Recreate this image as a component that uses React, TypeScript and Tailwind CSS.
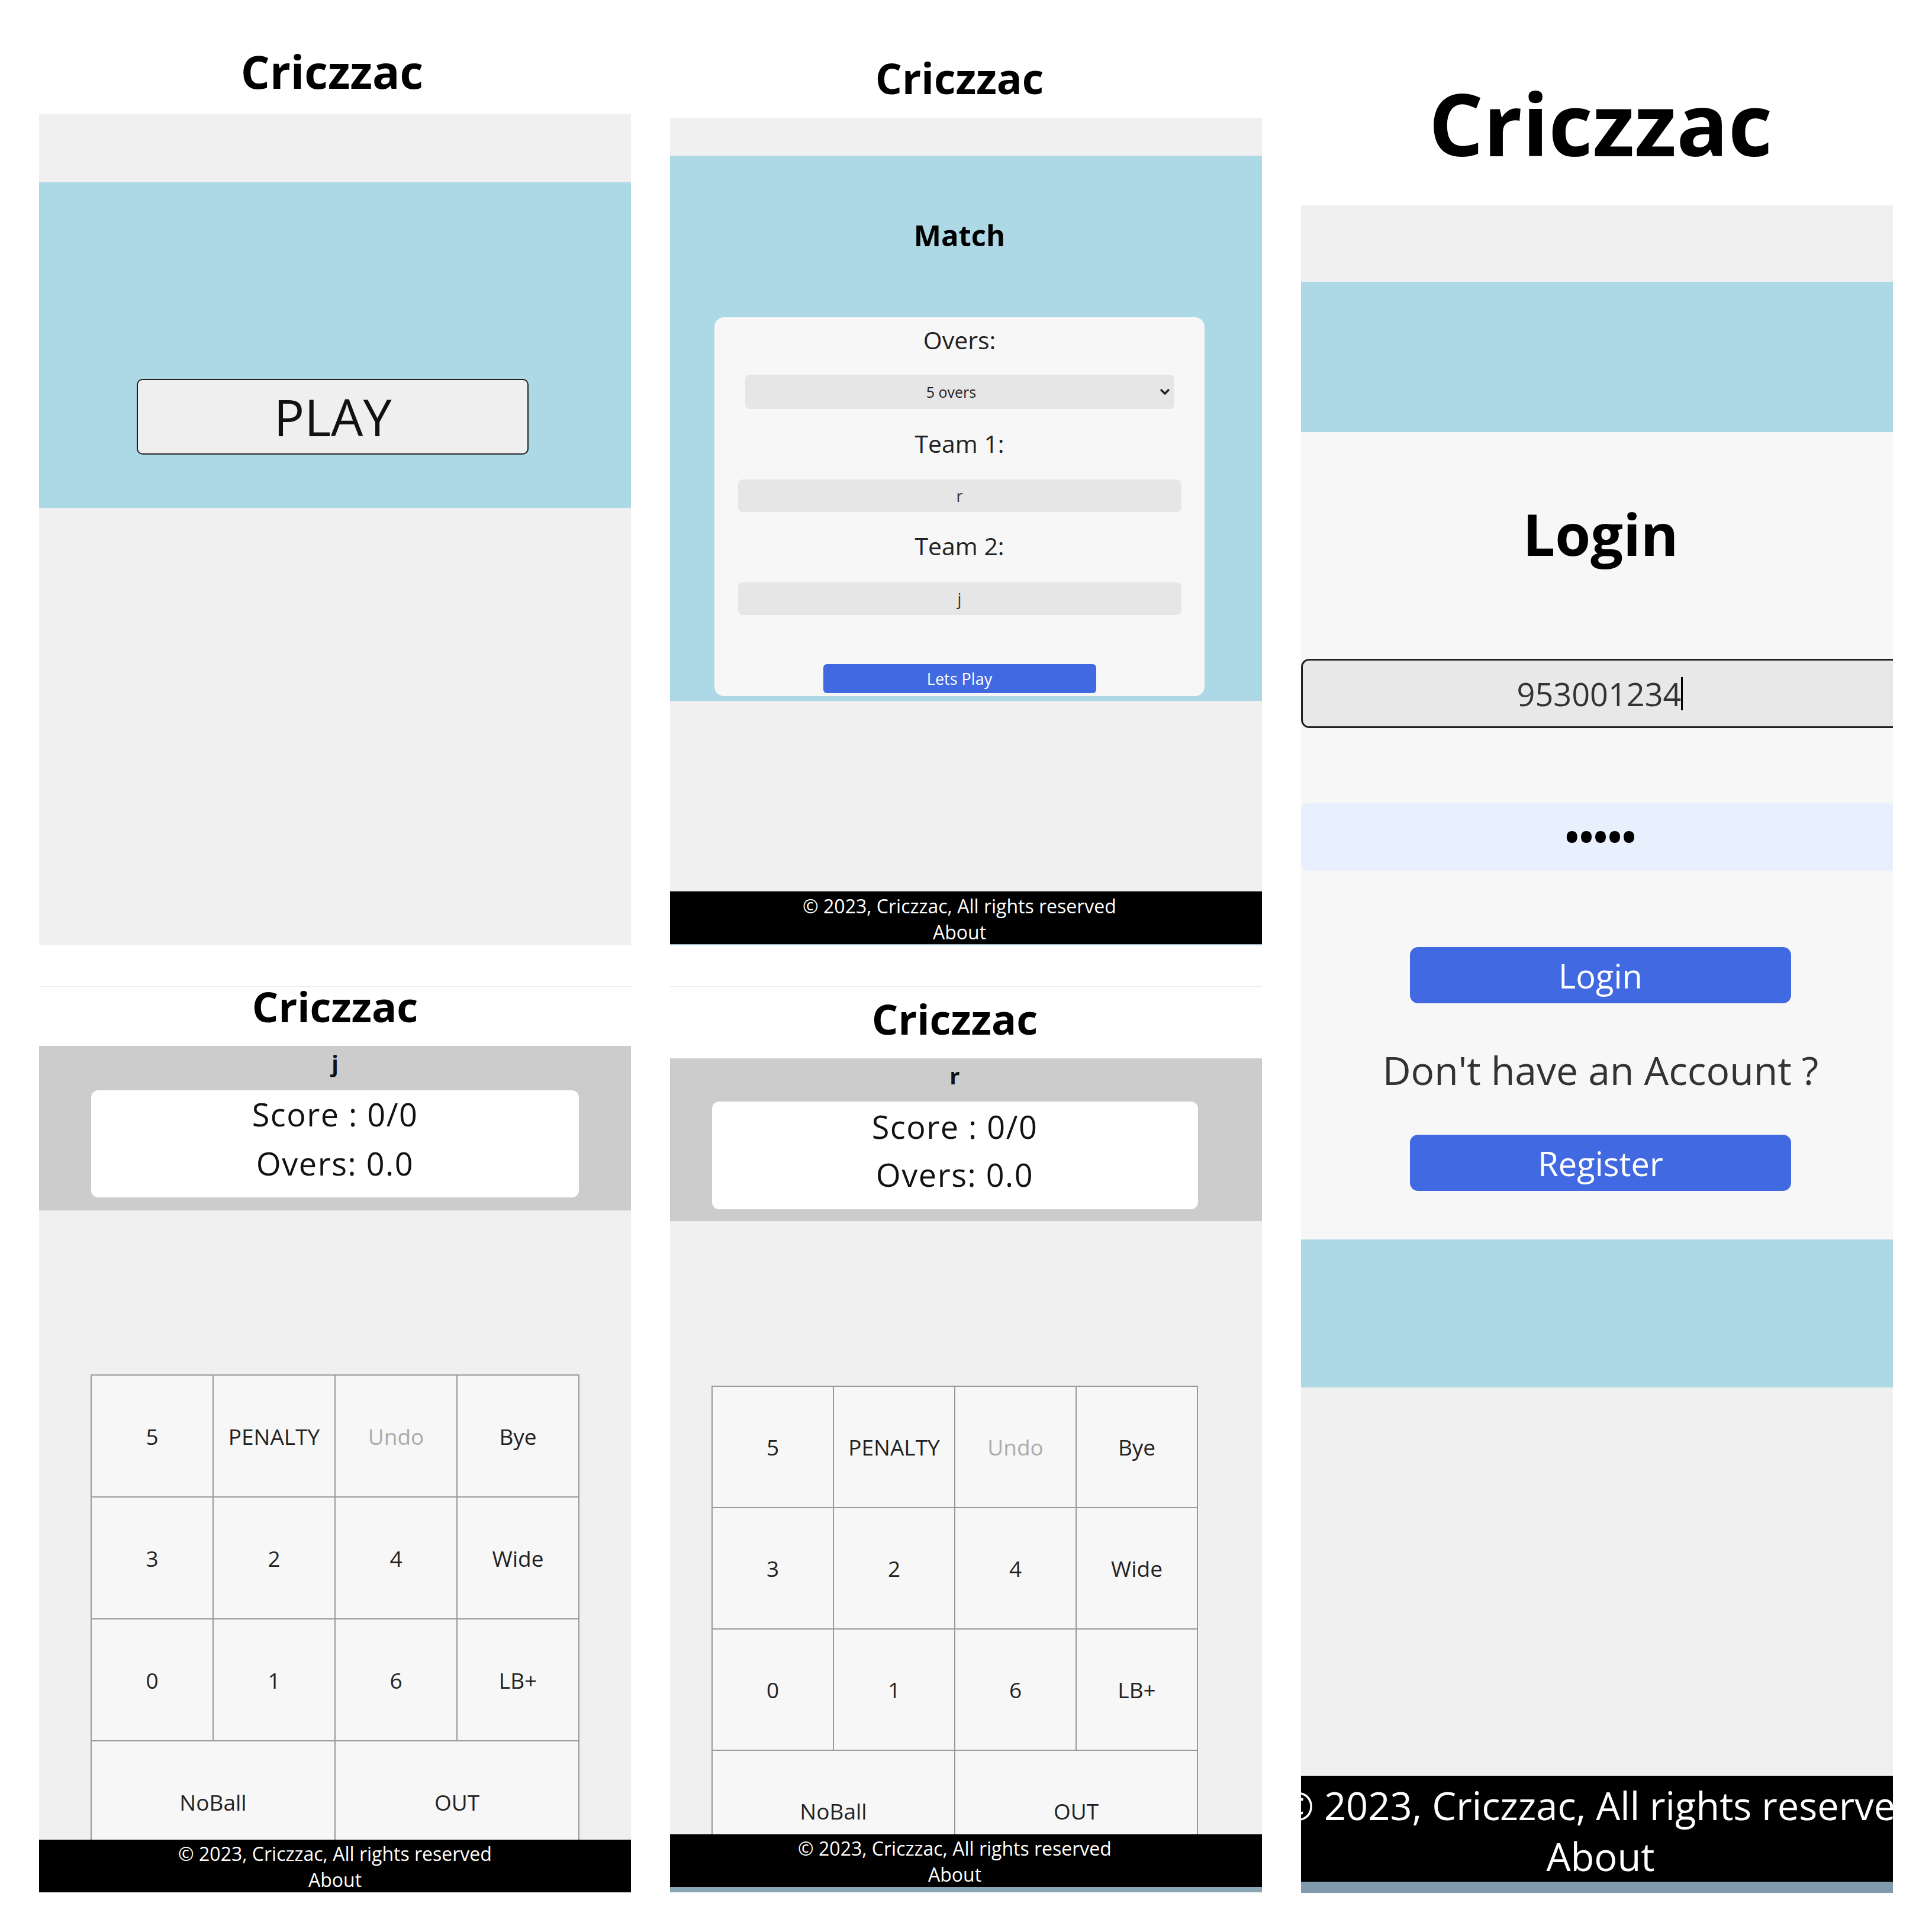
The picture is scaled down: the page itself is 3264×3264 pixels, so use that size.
import { ChevronDown } from "lucide-react";

const footerText = "© 2023, Criczzac, All rights reserved";

function Title({ className = "" }: { className?: string }) {
  return <h1 className={`font-bold leading-none text-black ${className}`}>Criczzac</h1>;
}

function Footer({ className = "", lineClass = "h-0" }: { className?: string; lineClass?: string }) {
  return (
    <>
      <div className={`shrink-0 bg-black text-white flex flex-col items-center overflow-hidden whitespace-nowrap ${className}`}>
        <span>{footerText}</span>
        <span>About</span>
      </div>
      <div className={`shrink-0 ${lineClass}`} />
    </>
  );
}

function PlayScreen() {
  return (
    <div className="h-[1597px] flex flex-col bg-[#f0f0f0]">
      <div className="h-[193px] shrink-0 bg-white flex justify-center pt-[82px] pr-[10px]">
        <Title className="text-[77px]" />
      </div>
      <div className="h-[115px] shrink-0" />
      <div className="h-[550px] shrink-0 bg-[#add8e6] pt-[332px] pl-[165px]">
        <button className="w-[662px] h-[128px] rounded-[10px] border-2 border-[#222] bg-[#efefef] flex items-center justify-center text-[86px] leading-none text-[#111]">
          PLAY
        </button>
      </div>
    </div>
  );
}

function MatchScreen() {
  return (
    <div className="h-[1597px] flex flex-col bg-[#f0f0f0]">
      <div className="h-[199px] shrink-0 bg-white flex justify-center pt-[96px] pr-[22px]">
        <Title className="text-[71px]" />
      </div>
      <div className="h-[64px] shrink-0" />
      <div className="h-[921px] shrink-0 bg-[#add8e6] flex flex-col items-center pr-[22px]">
        <h2 className="mt-[110px] text-[49px] font-bold leading-none text-black">Match</h2>
        <div className="mt-[114px] w-[828px] h-[640px] rounded-[16px] bg-[#f7f7f7] flex flex-col items-center">
          <span className="mt-[18px] text-[41px] leading-none">Overs:</span>
          <div className="mt-[38px] w-[725px] h-[58px] shrink-0 rounded-[8px] bg-[#e6e6e6] flex items-center">
            <span className="flex-1 text-center text-[25px] leading-none text-[#222]">5 overs</span>
            <ChevronDown className="w-[24px] h-[24px] mr-[4px] text-[#222]" strokeWidth={3.5} />
          </div>
          <span className="mt-[38px] text-[41px] leading-none">Team 1:</span>
          <div className="mt-[40px] w-[749px] h-[55px] shrink-0 rounded-[8px] bg-[#e6e6e6] flex items-center justify-center text-[27px] leading-none text-[#333]">
            r
          </div>
          <span className="mt-[37px] text-[41px] leading-none">Team 2:</span>
          <div className="mt-[41px] w-[749px] h-[55px] shrink-0 rounded-[8px] bg-[#e6e6e6] flex items-center justify-center text-[27px] leading-none text-[#333]">
            j
          </div>
          <button className="mt-[83px] w-[461px] h-[49px] shrink-0 rounded-[6px] bg-[#4169e1] text-white text-[27px] leading-none flex items-center justify-center">
            Lets Play
          </button>
        </div>
      </div>
      <div className="flex-1" />
      <Footer className="h-[89px] pt-[3px] pr-[22px] text-[32px] leading-[44px]" lineClass="h-[2px] bg-[#9fbccb]" />
    </div>
  );
}

function LoginScreen() {
  return (
    <div className="w-[1000px] h-[3198px] shrink-0 flex flex-col overflow-hidden bg-[#f0f0f0]">
      <div className="h-[347px] shrink-0 bg-white flex justify-center pt-[135px] pl-[12px]">
        <Title className="text-[145px]" />
      </div>
      <div className="h-[129px] shrink-0" />
      <div className="h-[254px] shrink-0 bg-[#add8e6]" />
      <div className="h-[1364px] shrink-0 bg-[#f7f7f7] flex flex-col items-center">
        <h2 className="mt-[123px] ml-[12px] text-[97px] font-bold leading-none text-black">Login</h2>
        <div className="mt-[163px] self-start w-[1030px] h-[117px] shrink-0 rounded-[14px] border-[3px] border-[#222] bg-[#e8e8e8] flex items-center justify-center pr-[20px]">
          <span className="text-[54px] leading-none text-[#333]">953001234</span>
          <span className="w-[3px] h-[56px] bg-black" />
        </div>
        <div className="mt-[127px] self-start w-[1030px] h-[114px] shrink-0 rounded-[12px] bg-[#e8f0fe] flex items-center justify-center pr-[18px]">
          <span className="text-[64px] font-bold leading-none text-black">•••••</span>
        </div>
        <button className="mt-[129px] ml-[12px] w-[644px] h-[95px] shrink-0 rounded-[14px] bg-[#4169e1] text-white text-[56px] leading-none flex items-center justify-center">
          Login
        </button>
        <span className="mt-[79px] ml-[12px] text-[66px] leading-none text-[#333]">Don't have an Account ?</span>
        <button className="mt-[77px] ml-[12px] w-[644px] h-[95px] shrink-0 rounded-[14px] bg-[#4169e1] text-white text-[56px] leading-none flex items-center justify-center">
          Register
        </button>
      </div>
      <div className="h-[250px] shrink-0 bg-[#add8e6]" />
      <div className="h-[656px] shrink-0" />
      <Footer className="h-[179px] pt-[7px] pl-[12px] text-[65px] leading-[86px]" lineClass="h-[19px] bg-[#7f9bab]" />
    </div>
  );
}

const scoreLayouts = {
  j: {
    side: "pr-0",
    titleArea: "h-[100px]",
    title: "text-[70px] -mt-[2px]",
    header: "h-[278px]",
    team: "mt-[10px]",
    card: "mt-[27px] w-[824px] h-[181px] pt-[13px]",
    gap: "mt-[29px]",
    main: "h-[1063px]",
    grid: "mt-[277px] w-[826px]",
    cell: "h-[204px]",
    line: "h-0",
  },
  r: {
    side: "pr-[38px]",
    titleArea: "h-[121px] pt-[19px]",
    title: "text-[70px]",
    header: "h-[275px]",
    team: "mt-[10px]",
    card: "mt-[25px] w-[821px] h-[182px] pt-[15px]",
    gap: "mt-[27px]",
    main: "h-[1036px]",
    grid: "mt-[278px] w-[822px]",
    cell: "h-[203px]",
    line: "h-[9px] bg-[#8aa6b6]",
  },
};

const keys = ["5", "PENALTY", "Undo", "Bye", "3", "2", "4", "Wide", "0", "1", "6", "LB+"];

function ScoreScreen({ team }: { team: "j" | "r" }) {
  const s = scoreLayouts[team];
  return (
    <div className="h-[1531px] flex flex-col border-t border-[#e4ecec] bg-[#f0f0f0]">
      <div className={`shrink-0 bg-white flex justify-center ${s.titleArea} ${s.side}`}>
        <Title className={s.title} />
      </div>
      <div className={`shrink-0 bg-[#cccccc] flex flex-col items-center ${s.header} ${s.side}`}>
        <span className={`text-[38px] font-bold leading-none text-[#111] ${s.team}`}>{team}</span>
        <div className={`shrink-0 bg-white rounded-[12px] flex flex-col items-center text-[54px] tracking-[1.5px] leading-none text-[#111] ${s.card}`}>
          <span>Score : 0/0</span>
          <span className={s.gap}>Overs: 0.0</span>
        </div>
      </div>
      <div className={`shrink-0 overflow-hidden ${s.main} ${s.side}`}>
        <div className={`mx-auto grid grid-cols-4 gap-[2px] p-[2px] bg-[#9a9a9a] ${s.grid}`}>
          {keys.map((k) => (
            <div
              key={k}
              className={`bg-[#f7f7f7] flex items-center justify-center text-[37px] leading-none ${s.cell} ${
                k === "Undo" ? "text-[#ababab]" : "text-[#222]"
              }`}
            >
              {k}
            </div>
          ))}
          <div className={`col-span-2 bg-[#f7f7f7] flex items-center justify-center text-[37px] leading-none text-[#222] ${s.cell}`}>
            NoBall
          </div>
          <div className={`col-span-2 bg-[#f7f7f7] flex items-center justify-center text-[37px] leading-none text-[#222] ${s.cell}`}>
            OUT
          </div>
        </div>
      </div>
      <Footer className={`h-[89px] pt-[2px] text-[32px] leading-[44px] ${s.side}`} lineClass={s.line} />
    </div>
  );
}

export default function App() {
  return (
    <div className="w-[3264px] h-[3264px] bg-white flex items-start gap-[66px] px-[66px] font-['Open_Sans','Noto_Sans',sans-serif] text-[#222]">
      <div className="w-[1000px] shrink-0 flex flex-col gap-[69px]">
        <PlayScreen />
        <ScoreScreen team="j" />
      </div>
      <div className="w-[1000px] shrink-0 flex flex-col gap-[69px]">
        <MatchScreen />
        <ScoreScreen team="r" />
      </div>
      <LoginScreen />
    </div>
  );
}
